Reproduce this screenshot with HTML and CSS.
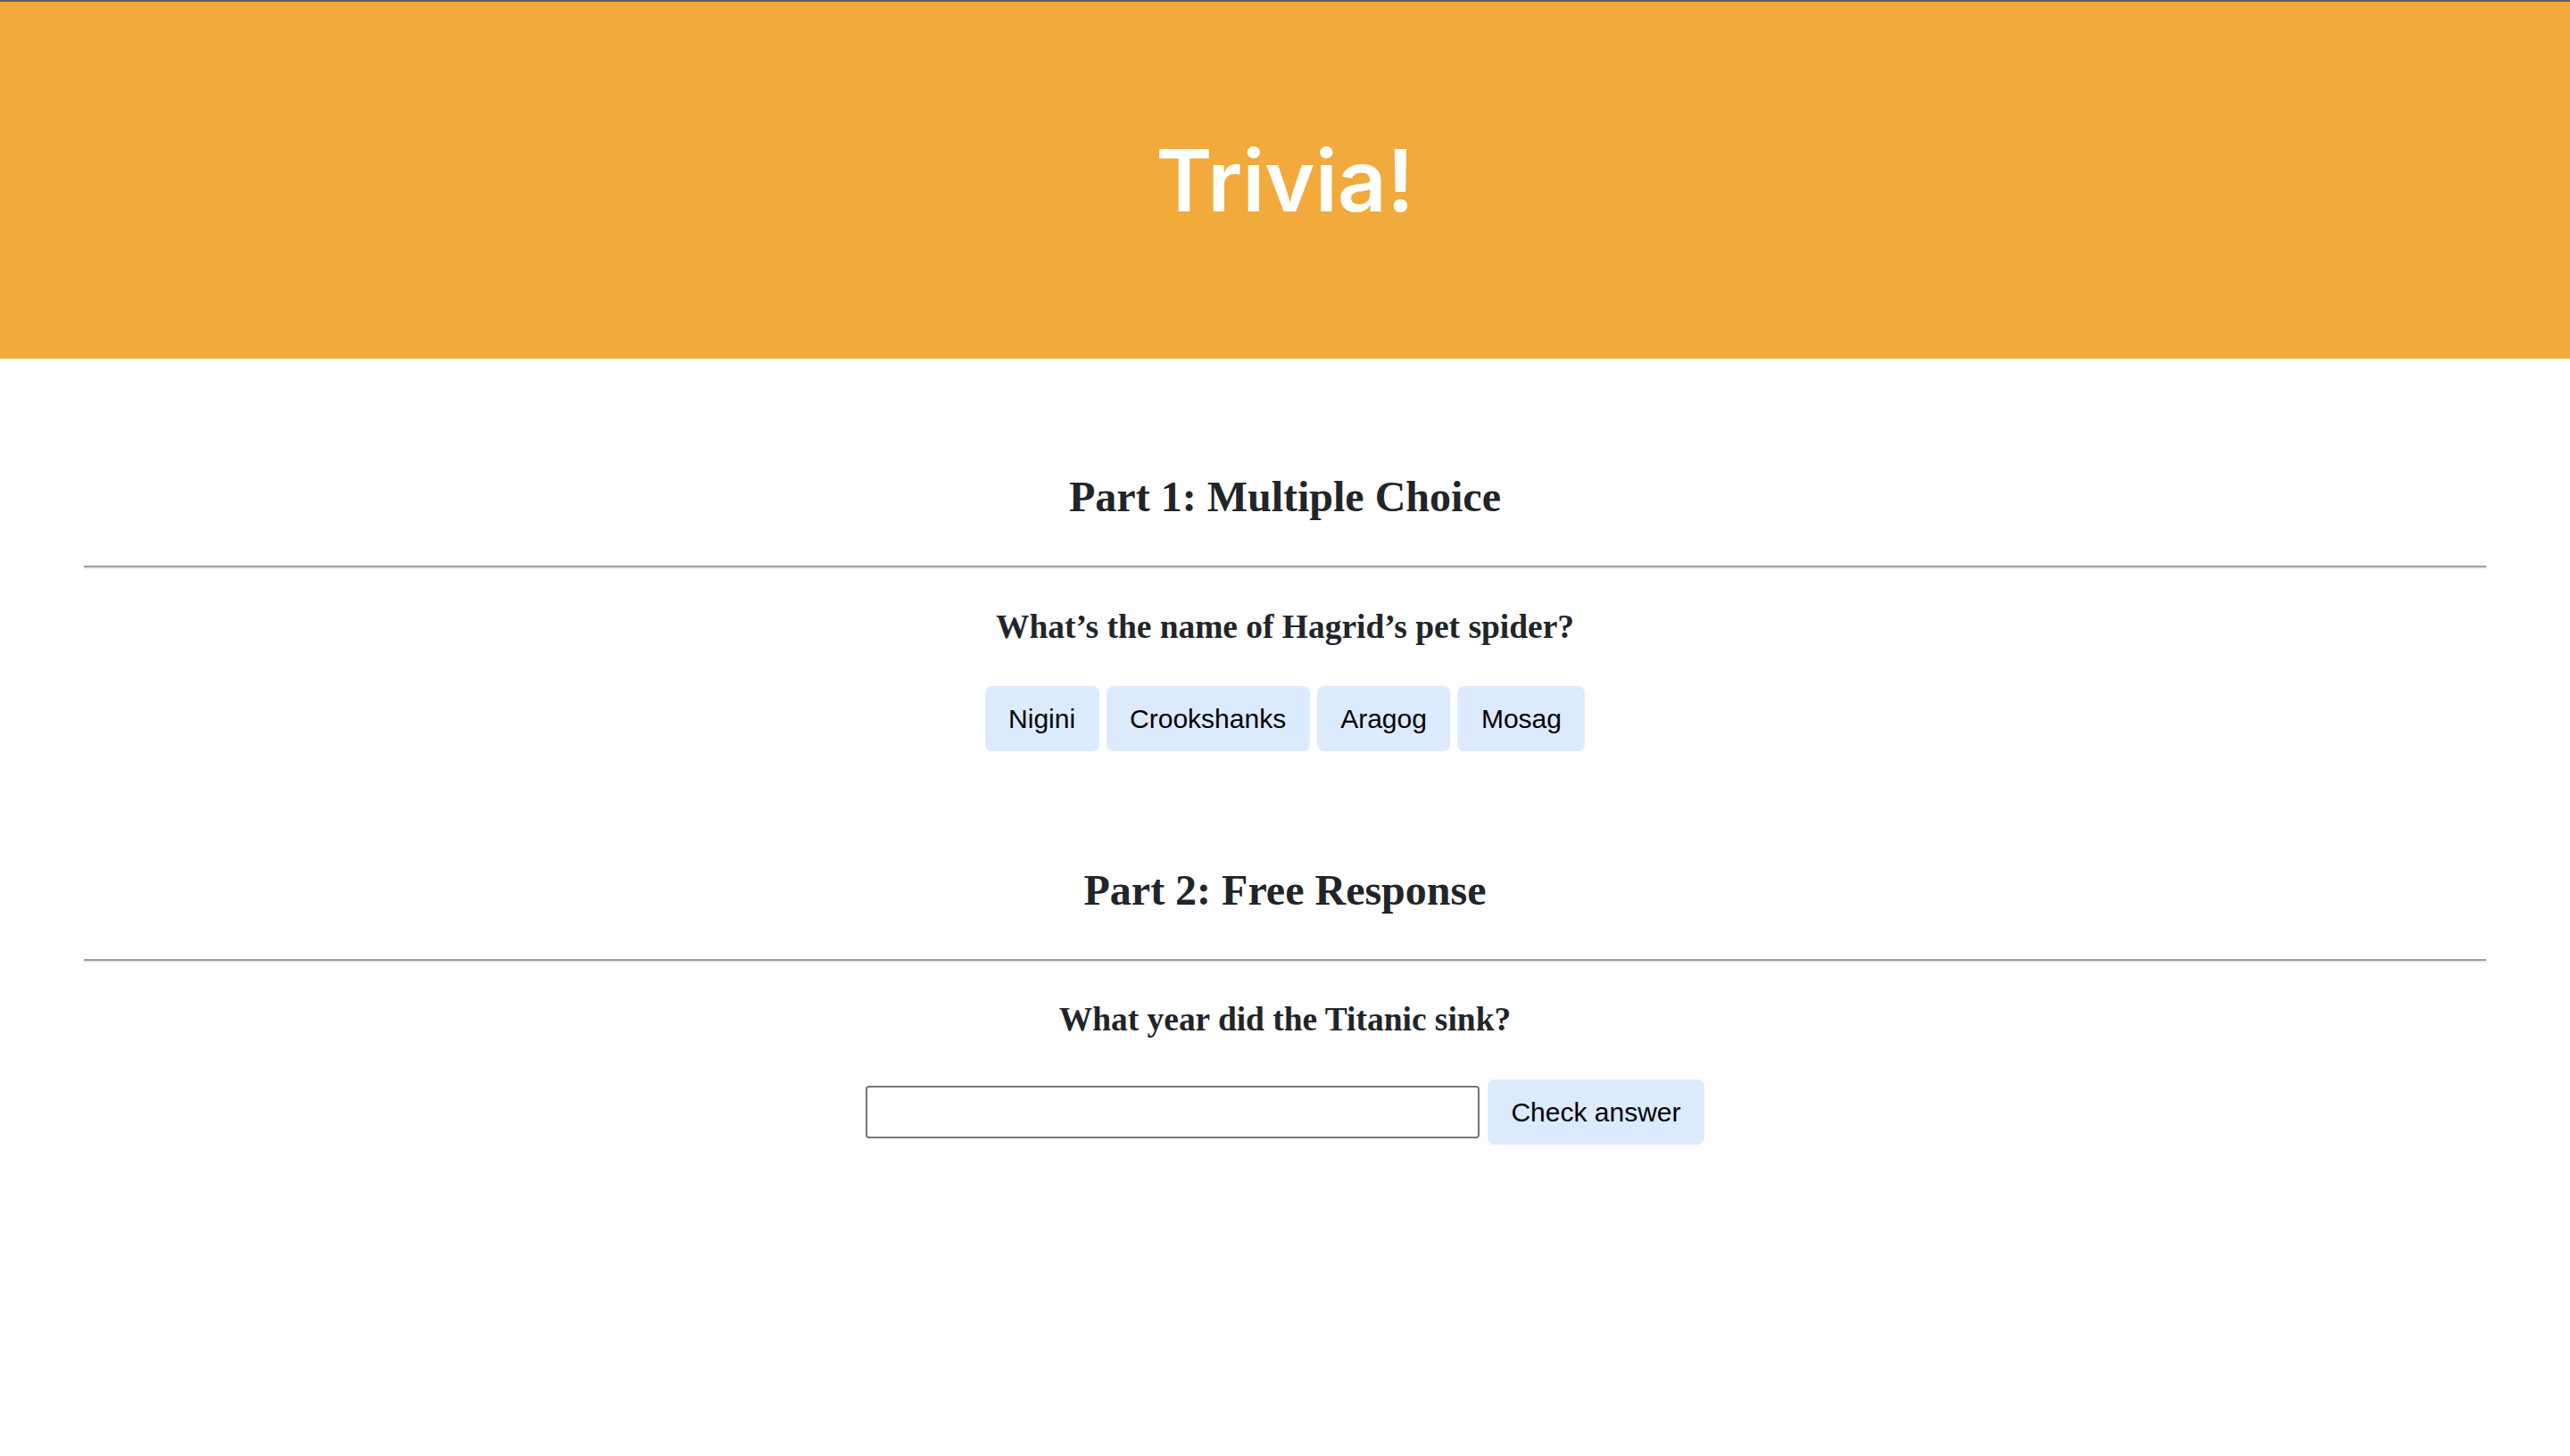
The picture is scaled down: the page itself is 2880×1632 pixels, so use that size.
FILE: index.html
```html
<!DOCTYPE html>
<html lang="en">
<head>
<meta charset="utf-8">
<title>Trivia!</title>
<link rel="stylesheet" href="styles.css">
</head>
<body>
<div class="topline"></div>
<header class="header">
  <h1 class="title">Trivia!</h1>
</header>
<main class="container">
  <section class="section section-first">
    <h2 class="part-title">Part 1: Multiple Choice</h2>
    <hr class="rule">
    <h3 class="question">What’s the name of Hagrid’s pet spider?</h3>
    <div class="choices">
      <button class="btn">Nigini</button>
      <button class="btn">Crookshanks</button>
      <button class="btn">Aragog</button>
      <button class="btn">Mosag</button>
    </div>
  </section>
  <section class="section section-second">
    <h2 class="part-title">Part 2: Free Response</h2>
    <hr class="rule">
    <h3 class="question question-second">What year did the Titanic sink?</h3>
    <div class="free-row">
      <input class="answer-input" type="text">
      <button class="btn">Check answer</button>
    </div>
  </section>
</main>
</body>
</html>
```
FILE: styles.css
```css
html, body {
  margin: 0;
  padding: 0;
  background: #ffffff;
}

body {
  font-family: "Liberation Serif", "Times New Roman", serif;
  color: #212529;
}

.topline {
  height: 2px;
  background: #5f5f5f;
}

.header {
  height: 400px;
  background: #f1aa3b;
  display: flex;
  align-items: center;
  justify-content: center;
}

.title {
  margin: 0;
  font-family: Inter, "Open Sans", sans-serif;
  font-weight: 600;
  font-size: 96px;
  line-height: 110px;
  color: #ffffff;
  letter-spacing: 0;
}

.container {
  padding: 0 94px;
}

.section {
  display: flex;
  flex-direction: column;
  align-items: stretch;
}

.section-first {
  padding-top: 127px;
}

.section-second {
  padding-top: 128px;
}

.part-title {
  margin: 0;
  text-align: center;
  font-size: 48px;
  line-height: 56px;
  font-weight: bold;
}

.rule {
  margin: 49px 0 0 0;
  height: 0;
  border: 0;
  border-top: 2px solid #9a9a9a;
  border-bottom: 2px solid #eeeeee;
}

.question {
  margin: 43px 0 0 0;
  text-align: center;
  font-size: 37.44px;
  line-height: 43px;
  font-weight: bold;
}

.question-second {
  margin-top: 42px;
}

.choices {
  margin-top: 45px;
  display: flex;
  justify-content: center;
  gap: 8px;
}

.btn {
  font-family: "Liberation Sans", Arial, sans-serif;
  font-size: 30px;
  line-height: 35px;
  padding: 19px 26.5px;
  border: 0;
  border-radius: 8px;
  background: #dbeafc;
  color: #000000;
  margin: 0;
}

.free-row {
  margin-top: 46px;
  display: flex;
  justify-content: center;
  align-items: center;
  gap: 9px;
}

.answer-input {
  box-sizing: border-box;
  width: 688px;
  height: 59px;
  margin: 0;
  border: 2px solid #767676;
  border-radius: 4px;
  background: #ffffff;
  font-family: "Liberation Sans", Arial, sans-serif;
  font-size: 26px;
  padding: 2px 4px;
}
```
